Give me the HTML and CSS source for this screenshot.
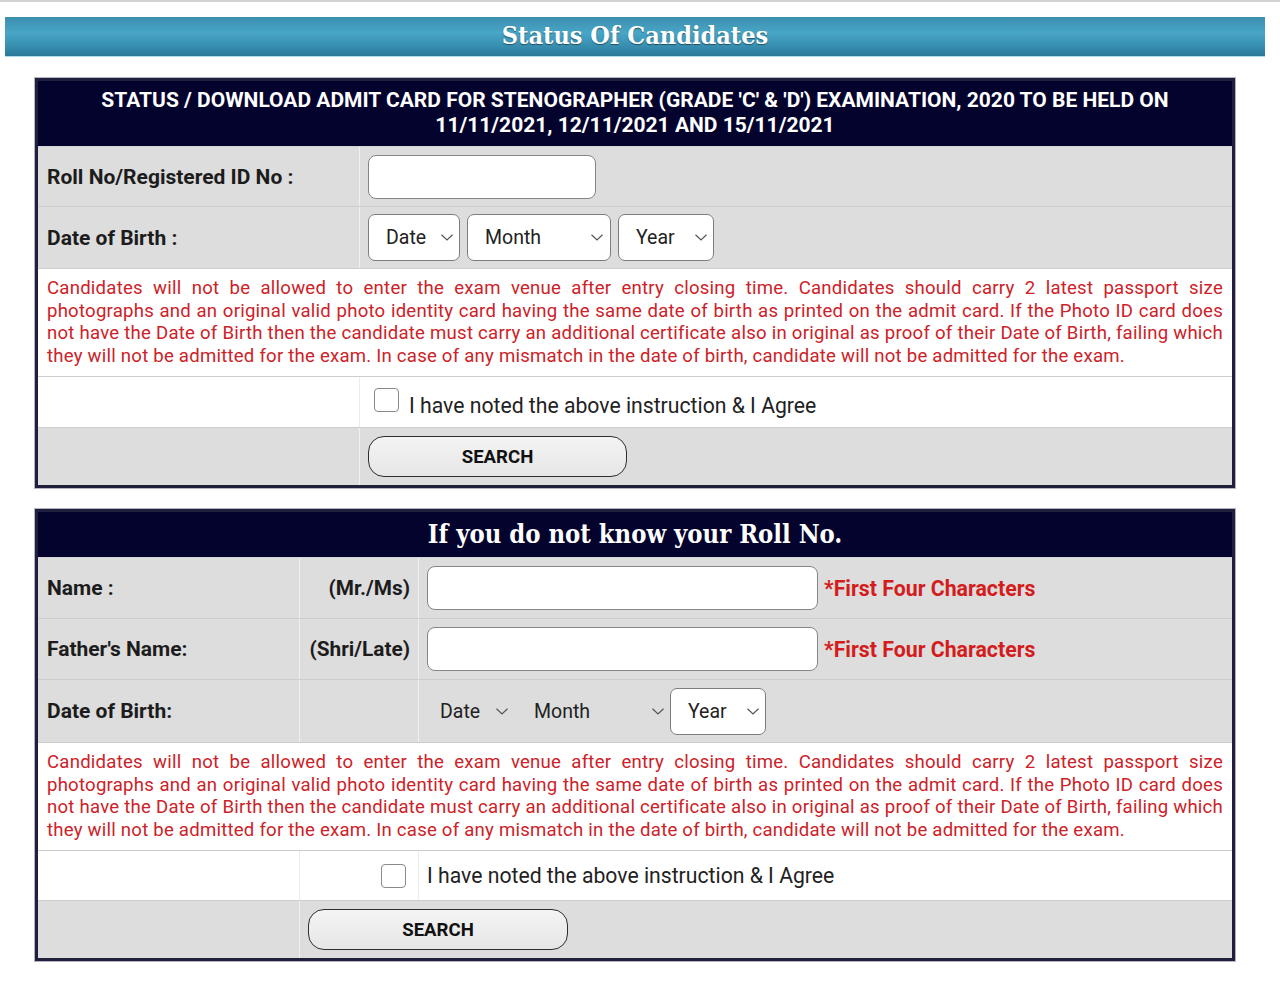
FILE: index.html
```html
<!DOCTYPE html>
<html lang="en">
<head>
<meta charset="utf-8">
<title>Status Of Candidates</title>
<link rel="stylesheet" href="styles.css">
</head>
<body>
<div class="page">
  <h1 class="titlebar">Status Of Candidates</h1>

  <section class="box box1">
    <div class="head head-sans">STATUS / DOWNLOAD ADMIT CARD FOR STENOGRAPHER (GRADE 'C' &amp; 'D') EXAMINATION, 2020 TO BE HELD ON<br>11/11/2021, 12/11/2021 AND 15/11/2021</div>

    <div class="row grey r1">
      <div class="cell lab">Roll No/Registered ID No :</div>
      <div class="cell val"><input class="txt roll" type="text"></div>
    </div>

    <div class="row grey r2">
      <div class="cell lab">Date of Birth :</div>
      <div class="cell val sels">
        <label class="sel w-date"><select><option>Date</option></select><svg class="chev" viewBox="0 0 12 7"><path d="M0.5 0.8 L6 6 L11.5 0.8"/></svg></label>
        <label class="sel w-month"><select><option>Month</option></select><svg class="chev" viewBox="0 0 12 7"><path d="M0.5 0.8 L6 6 L11.5 0.8"/></svg></label>
        <label class="sel w-year"><select><option>Year</option></select><svg class="chev" viewBox="0 0 12 7"><path d="M0.5 0.8 L6 6 L11.5 0.8"/></svg></label>
      </div>
    </div>

    <div class="row white instr">
      <p class="note">Candidates will not be allowed to enter the exam venue after entry closing time. Candidates should carry 2 latest passport size photographs and an original valid photo identity card having the same date of birth as printed on the admit card. If the Photo ID card does not have the Date of Birth then the candidate must carry an additional certificate also in original as proof of their Date of Birth, failing which they will not be admitted for the exam. In case of any mismatch in the date of birth, candidate will not be admitted for the exam.</p>
    </div>

    <div class="row white r4">
      <div class="cell lab"></div>
      <div class="cell val agree"><span class="cb"></span><span class="agree-text">I have noted the above instruction &amp; I Agree</span></div>
    </div>

    <div class="row grey r5 last">
      <div class="cell lab"></div>
      <div class="cell val"><button class="btn" type="button">SEARCH</button></div>
    </div>
  </section>

  <section class="box box2">
    <div class="head head-serif">If you do not know your Roll No.</div>

    <div class="row3 grey q1">
      <div class="cell lab">Name :</div>
      <div class="cell mid">(Mr./Ms)</div>
      <div class="cell val"><input class="txt name" type="text"><span class="req">*First Four Characters</span></div>
    </div>

    <div class="row3 grey q2">
      <div class="cell lab">Father's Name:</div>
      <div class="cell mid">(Shri/Late)</div>
      <div class="cell val"><input class="txt name" type="text"><span class="req">*First Four Characters</span></div>
    </div>

    <div class="row3 grey q3">
      <div class="cell lab">Date of Birth:</div>
      <div class="cell mid"></div>
      <div class="cell val sels">
        <label class="sel plain p-date"><select><option>Date</option></select><svg class="chev" viewBox="0 0 12 7"><path d="M0.5 0.8 L6 6 L11.5 0.8"/></svg></label>
        <label class="sel plain p-month"><select><option>Month</option></select><svg class="chev" viewBox="0 0 12 7"><path d="M0.5 0.8 L6 6 L11.5 0.8"/></svg></label>
        <label class="sel w-year"><select><option>Year</option></select><svg class="chev" viewBox="0 0 12 7"><path d="M0.5 0.8 L6 6 L11.5 0.8"/></svg></label>
      </div>
    </div>

    <div class="row white instr">
      <p class="note">Candidates will not be allowed to enter the exam venue after entry closing time. Candidates should carry 2 latest passport size photographs and an original valid photo identity card having the same date of birth as printed on the admit card. If the Photo ID card does not have the Date of Birth then the candidate must carry an additional certificate also in original as proof of their Date of Birth, failing which they will not be admitted for the exam. In case of any mismatch in the date of birth, candidate will not be admitted for the exam.</p>
    </div>

    <div class="row3 white q5">
      <div class="cell lab"></div>
      <div class="cell mid"><span class="cb"></span></div>
      <div class="cell val"><span class="agree-text">I have noted the above instruction &amp; I Agree</span></div>
    </div>

    <div class="row3 grey q6 last">
      <div class="cell lab"></div>
      <div class="cell val span2"><button class="btn btn2" type="button">SEARCH</button></div>
    </div>
  </section>
</div>
</body>
</html>
```

FILE: styles.css
```css
* { box-sizing: border-box; }

html, body { margin: 0; padding: 0; background: #ffffff; }

body {
  font-family: Roboto, "Noto Sans", sans-serif;
  color: #1c1c1c;
  border-top: 2px solid #d2d2d2;
}

.page {
  padding-top: 15px;
  padding-bottom: 20px;
}

.titlebar {
  margin: 0 0 21px 5px;
  width: 1260px;
  height: 40px;
  background: linear-gradient(to bottom, #3b8eae 0%, #48a6c6 40%, #3a92b3 70%, #2a7898 100%);
  border-bottom: 1px solid #a9dbe8;
  color: #ffffff;
  font-family: "DejaVu Serif Condensed", "DejaVu Serif", serif;
  font-weight: bold;
  font-size: 25px;
  line-height: 38px;
  text-align: center;
  text-shadow: 0 1px 1px rgba(0, 0, 0, 0.45);
}

.box {
  margin-left: 35px;
  width: 1200px;
  border: 3px solid #20203c;
  box-shadow: 0 0 0 1px #b4b4c4;
  background: #ffffff;
}

.box1 { margin-bottom: 21px; }

.head {
  background: #03032e;
  color: #ffffff;
  text-align: center;
  border-bottom: 1px solid #d4d4d4;
}

.head-sans {
  height: 66px;
  padding-top: 7px;
  font-weight: bold;
  font-size: 21px;
  line-height: 25px;
}

.head-serif {
  height: 46px;
  font-family: "DejaVu Serif Condensed", "DejaVu Serif", serif;
  font-weight: bold;
  font-size: 25.4px;
  line-height: 44px;
}

.row {
  display: grid;
  grid-template-columns: 322px 1fr;
  border-bottom: 1px solid #cdcdcd;
}

.row3 {
  display: grid;
  grid-template-columns: 262px 119px 1fr;
  border-bottom: 1px solid #cdcdcd;
}

.row.last, .row3.last { border-bottom: 0; }

.grey { background: #dddddd; }
.white { background: #ffffff; }

.cell {
  display: flex;
  align-items: center;
}

.lab {
  padding-left: 9px;
  font-weight: bold;
  font-size: 21px;
  border-right: 1px solid #ececec;
}

.grey .lab, .grey .mid { border-right-color: #f0f0f0; }

.mid {
  justify-content: flex-end;
  padding-right: 8px;
  font-weight: bold;
  font-size: 20.8px;
  border-right: 1px solid #ececec;
}

.val { padding-left: 8px; }

.r1 { height: 60px; }
.r2 { height: 62px; }
.r4 { height: 51px; }
.r5 { height: 57px; }

.q1, .q2 { height: 61px; }
.q3 { height: 63px; }
.q5 { height: 50px; }
.q6 { height: 57px; }

.instr {
  display: block;
  height: 108px;
}

.note {
  margin: 0;
  padding: 8px 9px 0 9px;
  color: #cc2228;
  font-size: 18.6px;
  line-height: 22.5px;
  letter-spacing: 0.22px;
  text-align: justify;
}

.txt {
  height: 44px;
  border: 1.5px solid #858585;
  border-radius: 8px;
  background: #ffffff;
  font: inherit;
  padding: 0 10px;
  outline: none;
}

.roll { width: 228px; margin-top: 1px; }
.name { width: 391px; }

.req {
  margin-left: 6px;
  color: #d41c1c;
  font-weight: bold;
  font-size: 21.3px;
}

.sels { gap: 7px; }

.sel {
  position: relative;
  display: inline-block;
  height: 47px;
}

.sel select {
  -webkit-appearance: none;
  appearance: none;
  width: 100%;
  height: 100%;
  border: 1.5px solid #7d7d7d;
  border-radius: 7px;
  background: #ffffff;
  color: #222222;
  font-family: Roboto, "Noto Sans", sans-serif;
  font-size: 19.5px;
  padding: 0 0 0 17px;
  outline: none;
}

.chev {
  position: absolute;
  top: 20px;
  width: 12px;
  height: 7px;
  fill: none;
  stroke: #555555;
  stroke-width: 1.2;
  pointer-events: none;
}

.w-date { width: 92px; }
.w-date .chev { right: 7px; }
.w-month { width: 144px; }
.w-month .chev { right: 8px; }
.w-year { width: 96px; }
.w-year .chev { right: 7px; }

.q3 .val { padding-left: 0; }
.q3 .sels { gap: 0; }

.plain select {
  border: 0;
  background: transparent;
}
.p-date { width: 98px; }
.p-date select { padding-left: 21px; }
.p-date .chev { right: 9px; }
.p-month { width: 153px; }
.p-month .chev { right: 6px; }

.cb {
  display: inline-block;
  width: 25px;
  height: 24px;
  border: 1.5px solid #8a8a8a;
  border-radius: 4px;
  background: #ffffff;
}

.agree { padding-left: 14px; }
.agree .cb { margin-right: 10px; margin-top: -4px; }
.r4 .agree-text { margin-top: 6px; }

.agree-text {
  font-size: 21.2px;
  color: #222222;
}

.q5 .mid { padding-right: 12px; }
.q5 .val { padding-left: 8px; }

.btn {
  width: 259px;
  height: 41px;
  border: 1.5px solid #2e2e2e;
  border-radius: 16px;
  background: linear-gradient(to bottom, #f4f4f4, #e6e6e6);
  color: #111111;
  font-family: Roboto, "Noto Sans", sans-serif;
  font-weight: bold;
  font-size: 18.6px;
  cursor: pointer;
}

.span2 { grid-column: 2 / 4; }
.btn2 { width: 260px; }
```
